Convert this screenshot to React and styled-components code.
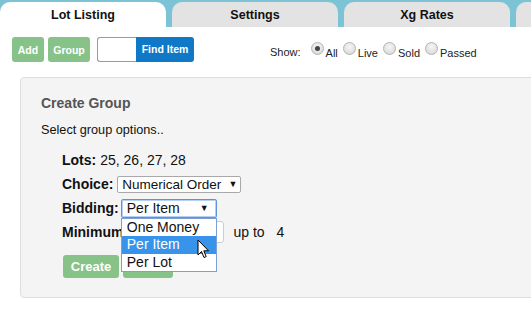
import React from "react";
import styled, { createGlobalStyle } from "styled-components";

const Global = createGlobalStyle`
  html, body { margin: 0; padding: 0; background: #fff; overflow: hidden; }
  body { font-family: "Liberation Sans", Arial, sans-serif; color: #111; }
`;

const Page = styled.div`
  width: 531px;
  height: 331px;
  overflow: hidden;
  position: relative;
`;

const TabBar = styled.div`
  display: flex;
  gap: 6px;
  padding-top: 2px;
  height: 25px;
  background: #7cc3d5;
  width: 700px;
`;

const Tab = styled.div`
  flex: 0 0 166px;
  height: 25px;
  border-radius: 10px 10px 0 0;
  background: ${(p) => (p.$active ? "#fff" : "#e3e3e3")};
  font-weight: bold;
  font-size: 12.5px;
  line-height: 26px;
  text-align: center;
  color: #111;
`;

const Toolbar = styled.div`
  display: flex;
  align-items: center;
  height: 25px;
  margin: 10px 0 0 12px;
`;

const GreenButton = styled.button`
  height: ${(p) => p.$h || 25}px;
  width: ${(p) => p.$w}px;
  padding: 0;
  margin-right: ${(p) => p.$mr || 0}px;
  border: none;
  border-radius: 3px;
  background: #87c388;
  color: #fff;
  font-family: inherit;
  font-weight: bold;
  font-size: ${(p) => p.$fs || 10.5}px;
  cursor: default;
`;

const SearchGroup = styled.div`
  display: flex;
  margin-left: 7px;
  height: 25px;
`;

const SearchInput = styled.div`
  width: 38px;
  height: 23px;
  border: 1px solid #9a9a9a;
  border-right: none;
  border-radius: 3px 0 0 3px;
  background: #fff;
`;

const FindButton = styled.div`
  width: 58px;
  height: 25px;
  background: #1079c7;
  border-radius: 0 3px 3px 0;
  color: #fff;
  font-weight: bold;
  font-size: 10.5px;
  line-height: 24px;
  text-align: center;
`;

const ShowGroup = styled.div`
  display: flex;
  align-items: center;
  margin-left: 76px;
  padding-top: 2px;
  font-size: 11px;
  color: #222;
`;

const ShowLabel = styled.span`
  margin-right: 10px;
  padding-top: 3px;
`;

const RadioItem = styled.label`
  display: flex;
  align-items: center;
  margin-right: 5px;
`;

const RadioDot = styled.span`
  width: 11px;
  height: 11px;
  border-radius: 50%;
  border: 1px solid #b4b4b4;
  background: radial-gradient(circle at 50% 35%, #f6f6f6 0%, #dedede 70%, #cfcfcf 100%);
  display: inline-flex;
  align-items: center;
  justify-content: center;
  margin-right: 2px;
  margin-top: -4px;
  &::after {
    content: "";
    width: 5px;
    height: 5px;
    border-radius: 50%;
    background: ${(p) => (p.$checked ? "#444" : "transparent")};
  }
`;

const RadioText = styled.span`
  padding-top: 4px;
`;

const Panel = styled.div`
  margin: 15px 0 0 20px;
  width: 540px;
  height: 221px;
  box-sizing: border-box;
  background: #f4f4f4;
  border: 1px solid #dedede;
  border-radius: 4px;
  padding: 17px 20px;
  position: relative;
`;

const Title = styled.div`
  font-size: 14px;
  font-weight: bold;
  color: #555;
  line-height: 16px;
`;

const Intro = styled.div`
  font-size: 12.7px;
  line-height: 16px;
  margin-top: 11px;
`;

const Form = styled.div`
  margin: 10px 0 0 21px;
  display: flex;
  flex-direction: column;
`;

const Row = styled.div`
  display: flex;
  align-items: center;
  height: 24px;
  font-size: 14px;
`;

const Label = styled.span`
  font-weight: bold;
  margin-right: ${(p) => p.$mr ?? 4}px;
  color: #111;
`;

const Select = styled.div`
  position: relative;
  width: ${(p) => p.$w}px;
  height: ${(p) => (p.$focus ? 19 : 17)}px;
  box-sizing: border-box;
  background: #fff;
  border: 1px solid ${(p) => (p.$focus ? "#5f93d8" : "#a9a9a9")};
  box-shadow: ${(p) => (p.$focus ? "inset 0 0 0 1px #b6d0f2" : "none")};
  border-radius: 2px;
  font-size: ${(p) => p.$fs}px;
  line-height: ${(p) => (p.$focus ? 17 : 15)}px;
  padding-left: ${(p) => (p.$focus ? 5 : 4)}px;
  padding-right: ${(p) => (p.$focus ? 7 : 3)}px;
  display: flex;
  justify-content: space-between;
`;

const Arrow = styled.span`
  font-size: 9px;
`;

const Dropdown = styled.div`
  position: absolute;
  left: -1px;
  top: 18px;
  width: 96px;
  box-sizing: border-box;
  background: #fff;
  border: 1px solid #7b9fd6;
  z-index: 5;
`;

const Option = styled.div`
  height: 17.5px;
  line-height: 17px;
  padding-left: 5px;
  font-size: 14px;
  background: ${(p) => (p.$hl ? "#3893ea" : "#fff")};
  color: ${(p) => (p.$hl ? "#fff" : "#111")};
`;

const SmallInput = styled.div`
  width: 97px;
  height: 22px;
  box-sizing: border-box;
  border: 1px solid #ccc;
  border-radius: 3px;
  background: #fff;
  margin-right: 9px;
`;

const Plain = styled.span`
  margin-right: ${(p) => p.$mr || 0}px;
`;

const ButtonRow = styled.div`
  display: flex;
  margin-top: 11px;
  margin-left: 1px;
  gap: 4px;
`;

const Cursor = styled.svg`
  position: absolute;
  left: 197px;
  top: 239px;
  z-index: 10;
`;

export default function App() {
  return (
    <Page>
      <Global />
      <TabBar>
        <Tab $active>Lot Listing</Tab>
        <Tab>Settings</Tab>
        <Tab>Xg Rates</Tab>
        <Tab />
      </TabBar>
      <Toolbar>
        <GreenButton $mr={4} $w={32}>Add</GreenButton>
        <GreenButton $w={42}>Group</GreenButton>
        <SearchGroup>
          <SearchInput />
          <FindButton>Find Item</FindButton>
        </SearchGroup>
        <ShowGroup>
          <ShowLabel>Show:</ShowLabel>
          <RadioItem><RadioDot $checked /><RadioText>All</RadioText></RadioItem>
          <RadioItem><RadioDot /><RadioText>Live</RadioText></RadioItem>
          <RadioItem><RadioDot /><RadioText>Sold</RadioText></RadioItem>
          <RadioItem><RadioDot /><RadioText>Passed</RadioText></RadioItem>
        </ShowGroup>
      </Toolbar>
      <Panel>
        <Title>Create Group</Title>
        <Intro>Select group options..</Intro>
        <Form>
          <Row>
            <Label>Lots:</Label>
            <Plain>25, 26, 27, 28</Plain>
          </Row>
          <Row>
            <Label>Choice:</Label>
            <Select $w={124} $fs={13.5}>
              <span>Numerical Order</span>
              <Arrow>▼</Arrow>
            </Select>
          </Row>
          <Row>
            <Label $mr={2}>Bidding:</Label>
            <Select $w={96} $fs={14} $focus>
              <span>Per Item</span>
              <Arrow>▼</Arrow>
              <Dropdown>
                <Option>One Money</Option>
                <Option $hl>Per Item</Option>
                <Option>Per Lot</Option>
              </Dropdown>
            </Select>
          </Row>
          <Row>
            <Label>Minimum</Label>
            <SmallInput />
            <Plain $mr={12}>up to</Plain>
            <Plain>4</Plain>
          </Row>
          <ButtonRow>
            <GreenButton $h={23} $w={56} $fs={13}>Create</GreenButton>
            <GreenButton $h={23} $w={50} $fs={13} aria-label="Cancel" />
          </ButtonRow>
        </Form>
      </Panel>
      <Cursor width="13" height="20" viewBox="0 0 13 20">
        <path d="M1 1 L1 16 L4.5 12.5 L7 18.5 L9.2 17.6 L6.8 11.8 L11.5 11.8 Z" fill="#fff" stroke="#000" strokeWidth="1" strokeLinejoin="miter" />
      </Cursor>
    </Page>
  );
}
